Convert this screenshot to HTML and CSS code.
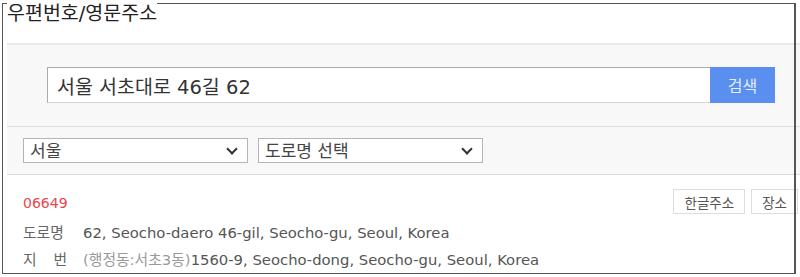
FILE: index.html
```html
<!DOCTYPE html>
<html lang="ko">
<head>
    <meta charset="UTF-8">
    <meta name="viewport" content="width=device-width, initial-scale=1.0">
    <title>우편번호/영문주소</title>
    <link rel="stylesheet" href="styles.css">
</head>
<body>
    <div class="popup">
        <h1 class="title"><span>우편번호/영문주소</span></h1>

        <div class="search-box">
            <input type="text" class="search-input" value="서울 서초대로 46길 62">
            <button class="search-btn">검색</button>
        </div>

        <div class="filter">
            <div class="select-wrap">
                <select class="select">
                    <option>서울</option>
                </select>
            </div>
            <div class="select-wrap">
                <select class="select">
                    <option>도로명 선택</option>
                </select>
            </div>
        </div>

        <div class="result">
            <div class="result-head">
                <span class="zipcode">06649</span>
                <div class="result-btns">
                    <button class="small-btn">한글주소</button>
                    <button class="small-btn">장소</button>
                </div>
            </div>
            <p class="addr"><span class="label">도로명</span>62, Seocho-daero 46-gil, Seocho-gu, Seoul, Korea</p>
            <p class="addr"><span class="label"><span>지</span><span>번</span></span><span class="sub">(행정동:서초3동)</span>1560-9, Seocho-dong, Seocho-gu, Seoul, Korea</p>
        </div>
    </div>
</body>
</html>
```

FILE: styles.css
```css
body {
    margin: 0;
    padding: 0;
    font-family: 'DejaVu Sans', 'Noto Sans CJK KR', sans-serif;
    color: #333;
    background: #fff;
    overflow: hidden;
}
.popup {
    position: relative;
    width: 793px;
    height: 277px;
    margin-left: 7px;
}
/* frame drawn on top of the content */
.popup::after {
    content: '';
    position: absolute;
    top: 3px;
    left: -5px;
    width: 791px;
    height: 269px;
    border: 1px solid #555;
    border-right-width: 2px;
    pointer-events: none;
    z-index: 1;
}
.title {
    margin: 0;
    height: 43px;
    font-size: 19.5px;
    font-weight: normal;
    line-height: 28px;
    color: #222;
}
.title span {
    position: relative;
    z-index: 2;
    display: inline-block;
    height: 24px;
    line-height: 28px;
    background: #fff;
}
.search-box {
    display: flex;
    padding: 22px 25px 23px 40px;
    background: #f8f8f8;
    border-top: 2px solid #e8e8e8;
    border-bottom: 1px solid #ddd;
}
.search-input {
    flex: 1;
    height: 36px;
    box-sizing: border-box;
    margin: 0;
    padding: 0 9px;
    border: 1px solid #aaa;
    border-bottom-color: #d5d5d5;
    border-right: none;
    font-family: inherit;
    font-size: 19.5px;
    color: #333;
    outline: none;
}
.search-btn {
    width: 65px;
    height: 36px;
    margin: 0;
    border: none;
    background: #5a8fef;
    color: #e4ecff;
    font-family: inherit;
    font-size: 16px;
    cursor: pointer;
}
.filter {
    display: flex;
    gap: 10px;
    padding: 11px 16px 11px;
    background: #f8f8f8;
    border-bottom: 1px solid #ddd;
}
.select-wrap {
    position: relative;
    width: 225px;
}
.select-wrap::after {
    content: '';
    position: absolute;
    right: 12px;
    top: 7px;
    width: 6px;
    height: 6px;
    border-right: 2px solid #333;
    border-bottom: 2px solid #333;
    transform: rotate(45deg);
    pointer-events: none;
}
.select {
    width: 100%;
    height: 25px;
    box-sizing: border-box;
    margin: 0;
    padding: 0 6px;
    border: 1px solid #b5b5b5;
    border-radius: 0;
    background: #fff;
    -webkit-appearance: none;
    appearance: none;
    font-family: inherit;
    font-size: 17px;
    color: #444;
}
.result {
    padding: 14px 0 0 16px;
}
.result-head {
    display: flex;
    justify-content: space-between;
    align-items: flex-start;
    height: 30px;
}
.zipcode {
    margin-top: 6px;
    font-size: 14px;
    color: #e8474f;
}
.result-btns {
    display: flex;
    gap: 6px;
    margin-right: 2px;
}
.small-btn {
    height: 25px;
    margin: 0;
    padding: 0 10px;
    border: 1px solid #ddd;
    background: #fff;
    color: #555;
    font-family: inherit;
    font-size: 13.5px;
}
.addr {
    margin: 0;
    height: 27px;
    line-height: 27px;
    font-size: 14.8px;
    color: #555;
    white-space: nowrap;
}
.label {
    display: inline-flex;
    justify-content: space-between;
    width: 44px;
    margin-right: 16px;
    color: #666;
}
.sub {
    color: #999;
}
```
